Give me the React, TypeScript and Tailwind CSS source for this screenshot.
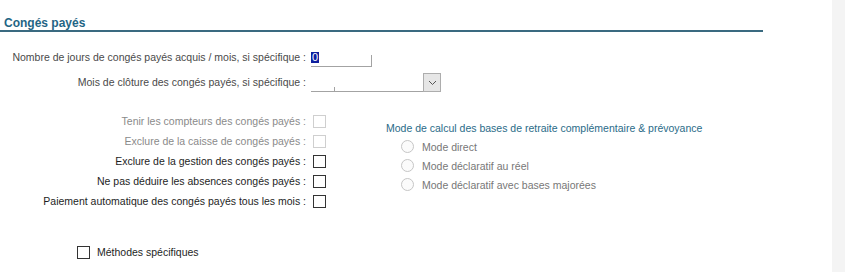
import { ReactNode } from 'react';

function Checkbox({ disabled }: { disabled?: boolean }) {
  return (
    <span
      className={`block w-[13px] h-[13px] bg-white border ${disabled ? 'border-[#cfcfcf]' : 'border-[#333333]'}`}
    />
  );
}

function CheckRow({ label, disabled }: { label: string; disabled?: boolean }) {
  return (
    <div className="flex items-center h-[20px]">
      <span className={`w-[306px] text-right whitespace-nowrap ${disabled ? 'text-[#8a8a8a]' : 'text-[#1e1e1e]'}`}>
        {label}
      </span>
      <span className="ml-[7px]">
        <Checkbox disabled={disabled} />
      </span>
    </div>
  );
}

function Radio({ children }: { children: ReactNode }) {
  return (
    <div className="flex items-center h-[19px] pl-[15px]">
      <span className="block w-[13px] h-[13px] rounded-full border border-[#c6c6c6] bg-[#fbfbfb]" />
      <span className="ml-[8px] text-[#777777] whitespace-nowrap">{children}</span>
    </div>
  );
}

export default function App() {
  return (
    <div className="flex w-[845px] h-[272px] bg-white overflow-hidden font-['Liberation_Sans',Arial,sans-serif] text-[10.5px] leading-[14px]">
      <div className="flex-1 flex flex-col">
        {/* Section title */}
        <div className="w-[763px] pt-[17px] pl-[4px] border-b-2 border-[#3a6a80]">
          <span className="font-bold text-[12px] text-[#1f6585] leading-[13px] block">Congés payés</span>
        </div>

        {/* Jours acquis / mois */}
        <div className="flex items-center h-[20px] mt-[15px]">
          <span className="w-[306px] text-right whitespace-nowrap text-[#4a4a4a]">
            Nombre de jours de congés payés acquis / mois, si spécifique :
          </span>
          <div className="relative ml-[5px] w-[62px] h-[20px]">
            <div className="absolute left-0 bottom-0 w-[61px] h-[12px] border-b border-r border-[#a3a3a3]" />
            <span className="absolute left-0 top-[5px] px-[1px] bg-[#0f1f9e] text-white text-[11px] leading-[11px]">0</span>
          </div>
        </div>

        {/* Mois de clôture */}
        <div className="flex items-center h-[20px] mt-[5px]">
          <span className="w-[306px] text-right whitespace-nowrap text-[#4a4a4a]">
            Mois de clôture des congés payés, si spécifique :
          </span>
          <div className="ml-[5px] flex items-end h-[20px]">
            <div className="relative w-[112px] h-[5px] border-b border-[#a3a3a3]">
              <span className="absolute left-[23px] top-0 w-px h-[5px] bg-[#a3a3a3]" />
            </div>
            <div className="w-[18px] h-[19px] border border-[#adadad] bg-[#e6e6e6] flex items-center justify-center">
              <svg width="9" height="6" viewBox="0 0 9 6" fill="none">
                <path d="M1 1l3.5 3.5L8 1" stroke="#555555" strokeWidth="1" />
              </svg>
            </div>
          </div>
        </div>

        {/* Checkboxes + mode de calcul */}
        <div className="flex mt-[19px]">
          <div className="w-[386px] flex flex-col">
            <CheckRow label="Tenir les compteurs des congés payés :" disabled />
            <CheckRow label="Exclure de la caisse de congés payés :" disabled />
            <CheckRow label="Exclure de la gestion des congés payés :" />
            <CheckRow label="Ne pas déduire les absences congés payés :" />
            <CheckRow label="Paiement automatique des congés payés tous les mois :" />
          </div>
          <div className="flex flex-col pt-[8px]">
            <div className="h-[18px] flex items-center text-[#2a6b88] whitespace-nowrap">
              Mode de calcul des bases de retraite complémentaire &amp; prévoyance
            </div>
            <Radio>Mode direct</Radio>
            <Radio>Mode déclaratif au réel</Radio>
            <Radio>Mode déclaratif avec bases majorées</Radio>
          </div>
        </div>

        {/* Méthodes spécifiques */}
        <div className="flex items-center h-[20px] mt-[31px] pl-[77px]">
          <Checkbox />
          <span className="ml-[7px] text-[#1e1e1e]">Méthodes spécifiques</span>
        </div>
      </div>
      <div className="w-[13px] h-full bg-[#f4f4f4]" />
    </div>
  );
}
